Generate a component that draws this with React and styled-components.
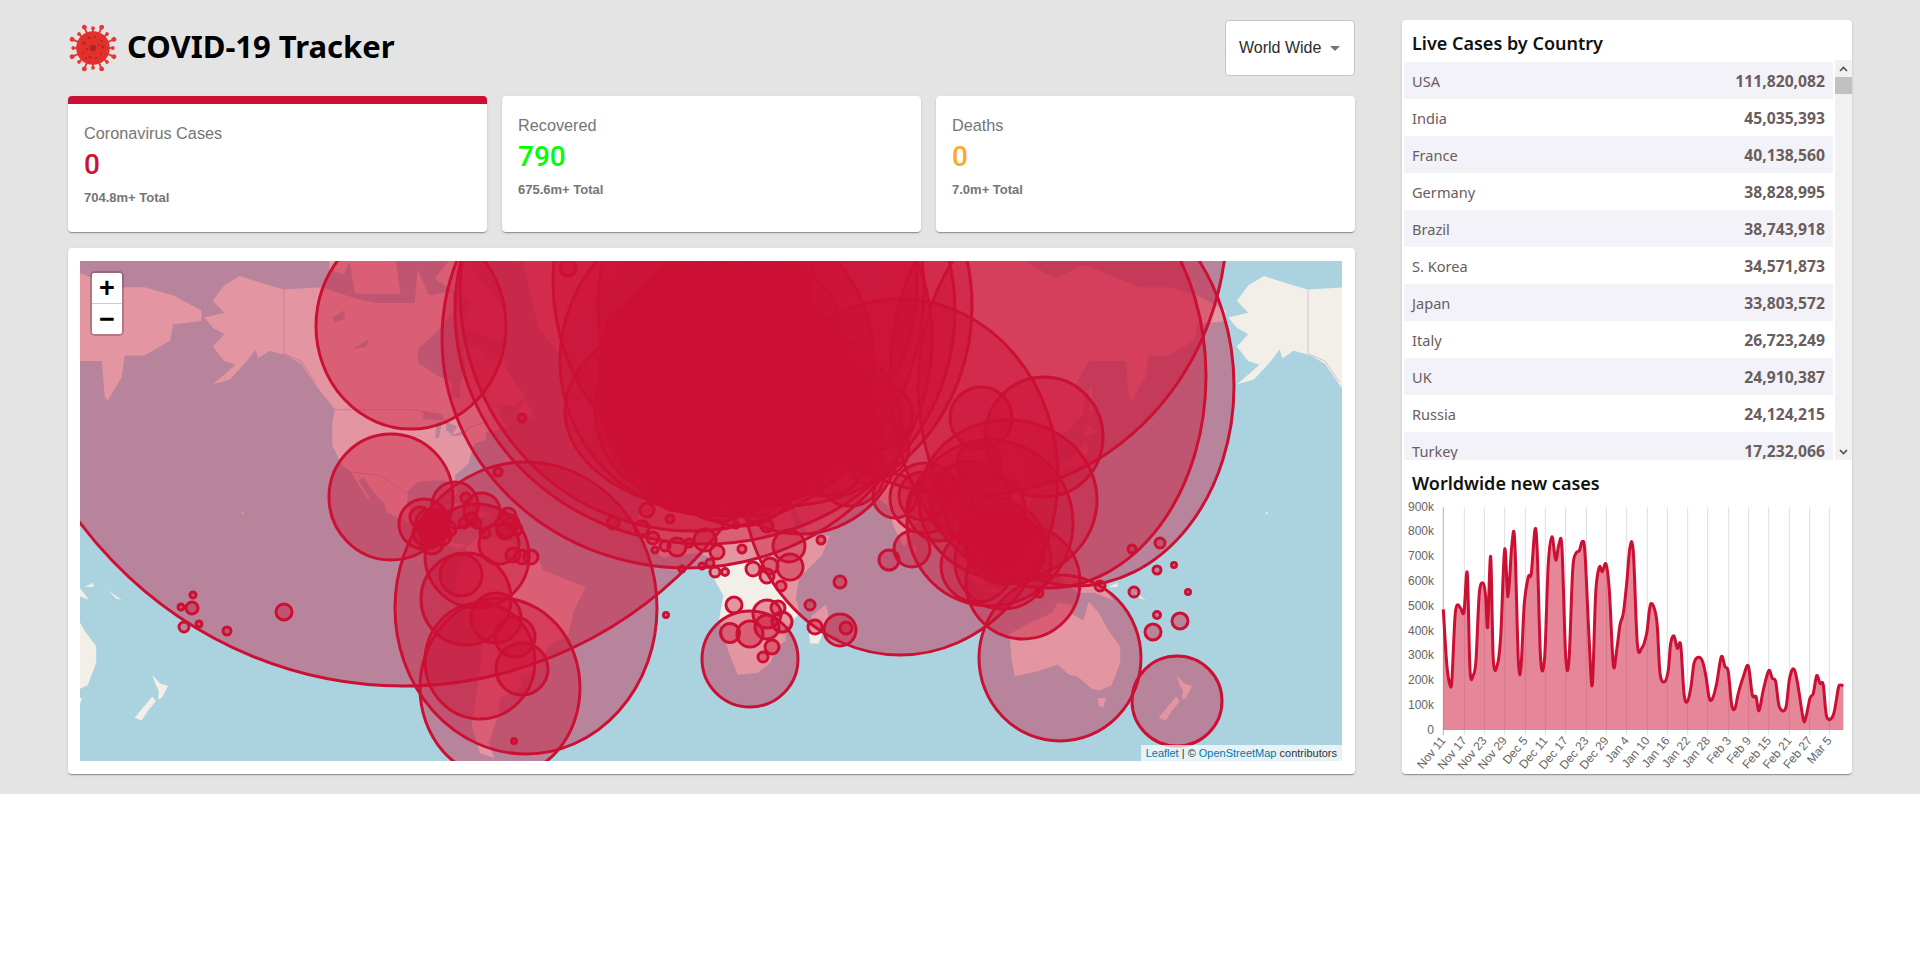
import React from "react";
import styled, { createGlobalStyle } from "styled-components";

const RED = "#cc1034";

const GlobalStyle = createGlobalStyle`
  html, body { margin: 0; padding: 0; background: #fff; }
  body { font-family: "Noto Sans", "Open Sans", sans-serif; }
`;

const Page = styled.div`
  display: flex;
  gap: 47px;
  height: 794px;
  box-sizing: border-box;
  padding: 20px 68px 20px;
  background: #e4e4e4;
`;
const LeftColumn = styled.div`
  width: 1287px;
  display: flex;
  flex-direction: column;
`;
const Header = styled.header`
  display: flex;
  align-items: flex-start;
  justify-content: space-between;
  height: 76px;
`;
const Brand = styled.div`
  display: flex;
  align-items: center;
  gap: 9px;
  height: 56px;
`;
const Title = styled.h1`
  margin: 0;
  padding-bottom: 4px;
  font: 700 31px/1 "Noto Sans", sans-serif;
  color: #000;
`;
const Select = styled.div`
  box-sizing: border-box;
  width: 130px;
  height: 56px;
  display: flex;
  align-items: center;
  gap: 9px;
  padding-left: 13px;
  background: #fff;
  border: 1px solid #c4c4c4;
  border-radius: 4px;
  font: 400 16px "Liberation Sans", Arial, sans-serif;
  color: #2b2b2b;
`;
const Caret = styled.span`
  width: 0;
  height: 0;
  border-left: 5px solid transparent;
  border-right: 5px solid transparent;
  border-top: 5px solid #757575;
`;
const Stats = styled.div`
  display: grid;
  grid-template-columns: repeat(3, 1fr);
  gap: 15px;
`;
const Surface = styled.div`
  background: #fff;
  border-radius: 4px;
  box-shadow: 0 2px 1px -1px rgba(0,0,0,.2), 0 1px 1px 0 rgba(0,0,0,.14), 0 1px 3px 0 rgba(0,0,0,.12);
`;
const StatCard = styled(Surface)`
  box-sizing: border-box;
  height: 136px;
  padding: 17px 16px 16px;
  border-top: ${p => (p.$selected ? `8px solid ${RED}` : "0 solid transparent")};
`;
const StatLabel = styled.div`
  font: 400 16.25px/24px "Liberation Sans", Arial, sans-serif;
  color: #757575;
`;
const StatValue = styled.div`
  font: 500 28px/34px Roboto, sans-serif;
  color: ${p => p.$color};
  margin-top: 3px;
`;
const StatTotal = styled.div`
  font: 700 13px/20px "Liberation Sans", Arial, sans-serif;
  color: #757575;
  margin-top: 6px;
`;
const MapCard = styled(Surface)`
  margin-top: 16px;
  padding: 13px 13px 13px 12px;
  height: 526px;
  box-sizing: border-box;
`;
const MapCanvas = styled.div`
  position: relative;
  width: 1262px;
  height: 500px;
  overflow: hidden;
  background: #aad3df;
`;
const MapSvg = styled.svg`
  display: block;
`;
const ZoomBar = styled.div`
  position: absolute;
  left: 10px;
  top: 10px;
  border: 2px solid rgba(0,0,0,.2);
  border-radius: 5px;
  background-clip: padding-box;
`;
const ZoomButton = styled.div`
  width: 30px;
  height: 30px;
  display: flex;
  align-items: center;
  justify-content: center;
  background: #fff;
  color: #000;
  font: 700 27px/30px "Liberation Sans", sans-serif;
  border-radius: ${p => (p.$top ? "2px 2px 0 0" : "0 0 2px 2px")};
  border-bottom: ${p => (p.$top ? "1px solid #ccc" : "none")};
`;
const Attribution = styled.div`
  position: absolute;
  right: 0;
  bottom: 0;
  padding: 0 5px;
  background: rgba(255,255,255,.7);
  font: 400 11px/16px "Liberation Sans", sans-serif;
  color: #333;
`;
const AttrLink = styled.span`
  color: #0078a8;
`;
const SideCard = styled(Surface)`
  width: 450px;
  height: 754px;
  display: flex;
  flex-direction: column;
  overflow: hidden;
`;
const SideTitle = styled.h3`
  margin: 0;
  box-sizing: border-box;
  padding: ${p => p.$pt}px 10px 0;
  height: ${p => p.$h}px;
  display: flex;
  align-items: center;
  font: 600 18px/1 "Noto Sans", sans-serif;
  color: #111;
`;
const TableWrap = styled.div`
  display: flex;
  height: 400px;
  padding-left: 2px;
`;
const Rows = styled.div`
  flex: 1;
  overflow: hidden;
  padding-top: 2px;
  margin-right: 2px;
`;
const Row = styled.div`
  height: 37px;
  box-sizing: border-box;
  display: flex;
  align-items: center;
  justify-content: space-between;
  padding: 0 8px 0 8px;
  background: ${p => (p.$odd ? "#f3f2f8" : "#fff")};
  font: 400 14.6px "Noto Sans", sans-serif;
  color: #6a5d5d;
`;
const RowValue = styled.strong`
  font-weight: 700;
  font-size: 15.7px;
`;
const ScrollTrack = styled.div`
  width: 17px;
  background: #f1f1f1;
  display: flex;
  flex-direction: column;
`;
const ScrollArrow = styled.div`
  height: 17px;
  display: flex;
  align-items: center;
  justify-content: center;
`;
const ScrollThumb = styled.div`
  height: 17px;
  background: #c1c1c1;
`;
const ScrollGap = styled.div`
  flex: 1;
`;
const ChartSvg = styled.svg`
  display: block;
`;

const ChartText = styled.text`
  font: 400 12px "Liberation Sans", Arial, sans-serif;
  fill: #666;
`;

const stats = [
  { label: "Coronavirus Cases", value: "0", total: "704.8m+ Total", color: RED, selected: true },
  { label: "Recovered", value: "790", total: "675.6m+ Total", color: "#00ff00" },
  { label: "Deaths", value: "0", total: "7.0m+ Total", color: "#ffa726" },
];

const countries = [
  ["USA", "111,820,082"], ["India", "45,035,393"], ["France", "40,138,560"], ["Germany", "38,828,995"],
  ["Brazil", "38,743,918"], ["S. Korea", "34,571,873"], ["Japan", "33,803,572"], ["Italy", "26,723,249"],
  ["UK", "24,910,387"], ["Russia", "24,124,215"], ["Turkey", "17,232,066"],
];

/* ------------ map drawing ------------ */
const WORLD = 1024;
const project = ([lon, lat]) => {
  const m = Math.log(Math.tan(Math.PI / 4 + (lat * Math.PI) / 360));
  return [605 + (lon / 360) * WORLD, 309 - (m * WORLD) / (2 * Math.PI)];
};
const toPath = pts =>
  pts.map((p, i) => {
    const [x, y] = project(p);
    return `${i ? "L" : "M"}${x.toFixed(1)} ${y.toFixed(1)}`;
  }).join("") + "Z";

const LAND = [
  // North America
  [[-169,66],[-162,66.7],[-166,68.3],[-162,70.2],[-156.5,71.3],[-148,70.4],[-141,69.7],[-128,70],[-115,68.5],[-108,68],[-95,68],[-94,72],[-90,69],[-82,69.5],[-81,67],[-87,64],[-94,61],[-94,58.7],[-88,56.5],[-82,55],[-82,52],[-79,51.5],[-79,55],[-77,57],[-78,62],[-72,61.5],[-69,58.8],[-65,60],[-60,55],[-56,52],[-60,50],[-66,50],[-65,48],[-64,46],[-61,45.5],[-66,44],[-70,43.5],[-70,41.7],[-74,40.5],[-75.5,37],[-76,35],[-81,31.5],[-80,26],[-81,25],[-82.7,28],[-84,30],[-89,30],[-94,29.5],[-97.3,27],[-97.8,22],[-95,18.5],[-91,18.5],[-90.5,21],[-87,21.5],[-88,16],[-84,15.8],[-83.5,11],[-81,9],[-78,9.5],[-77.5,8],[-80,7.5],[-83,8.3],[-87,12.5],[-92,14.5],[-96,16],[-105,20],[-105.5,22.5],[-109,25.8],[-113,31],[-114.7,30],[-110,23],[-112,25],[-115,29],[-117.2,32.5],[-120.5,34.5],[-124,40],[-124,46],[-123,49],[-130,54.5],[-135,58.5],[-140,60],[-146,60.8],[-150,59.5],[-151,61],[-154,59],[-160,55.5],[-166,54.5],[-158,58.3],[-162,59],[-166,61.5],[-162,63.5],[-166,64.5]],
  // Arctic islands
  [[-80,74],[-72,71],[-62,66.5],[-65,62],[-72,63.5],[-78,65],[-75,68],[-88,71]],
  [[-118,73],[-102,73.5],[-100,69.2],[-116,69.2]],
  [[-125,74],[-116,74],[-120,71.5],[-125,72]],
  [[-100,74],[-90,74],[-92,76],[-100,76]],
  [[-56,51.5],[-53,47],[-59,47.7]],
  // Greenland
  [[-44,60],[-52,65],[-55,70],[-60,76],[-30,80],[-22,72],[-32,68],[-40,65]],
  // Iceland
  [[-24,65.5],[-15,66.3],[-14,64.7],[-20,63.5]],
  // Cuba, Hispaniola
  [[-85,22],[-80,23],[-74.2,20.2],[-78,19.9]],
  [[-74.4,19.8],[-69,19.8],[-68.4,18.5],[-74.4,18.2]],
  // South America
  [[-77,8],[-72,12],[-62,10.5],[-52,5],[-50,0],[-44,-2.5],[-35,-6],[-39,-14],[-41,-22],[-48,-26],[-53,-34],[-58,-35],[-57,-38],[-65,-41],[-66,-46],[-69,-52],[-67,-55],[-72,-54],[-75,-48],[-73,-38],[-70.5,-20],[-76,-14],[-81,-5],[-79.5,1],[-77,4]],
  // Africa
  [[-6,35.5],[10,37],[11,33.5],[20,31],[25,31.5],[32,31],[34,28],[37,21],[39,15],[43,11.5],[51,12],[48,5],[40,-3],[39,-10],[40.5,-15],[35,-20],[35.5,-24],[32.5,-26],[30,-31],[25.5,-34],[18.5,-34.5],[15,-27],[12,-17],[13.5,-9],[9,-1],[9.5,4],[5,6],[-4,5],[-8,4.5],[-13,9],[-17,14.5],[-16,21],[-13,27],[-9,31]],
  // Eurasia
  [[5,60],[8,58],[11,59],[12.5,56],[10,54],[8.5,54],[4,52],[1.5,50.5],[-1.5,49.5],[-4.5,48.5],[-1,46],[-1.8,43.4],[-9,43.5],[-9,38],[-5.5,36],[-1,37],[0.5,40],[3,42],[7,43.5],[10,44],[12,42],[15.5,40],[16,38],[18,40],[16,41.5],[13,44],[13.5,45.6],[19,42],[20,39.5],[23,37],[24,40.5],[26,40.5],[29,41],[28,43],[30,46],[33,46],[35,45],[38,47],[37.5,45],[41,42],[36,41],[30,41],[27,39],[28,36.5],[36,36.5],[35,32],[34,28],[35,28],[37,24],[43,13],[52,16],[59,22.5],[56.5,25],[51.5,24.5],[48,30],[51,27],[57,26.5],[61,25],[67,25],[72.5,21],[73,16],[77,8],[80,13],[80.5,15.5],[87,21],[92,22],[94.5,16],[97,17],[98.5,9],[103.5,1.5],[101,3],[100,10],[103,11],[106,9],[109,12.5],[106,19],[108,21.5],[113,22],[120,26],[122,31],[119,35],[122,37],[118,39],[121,40],[126,38],[126.5,34.5],[129,36],[127.5,40],[130,42.5],[135,44],[140,48],[141,53],[137,54],[142,59],[155,59],[156,52],[157,51],[162,56],[163,60],[170,60],[179,62.5],[180,65],[190,65.5],[190,67],[180,69],[170,70],[160,70],[140,72.5],[130,71],[113,74],[100,77],[80,73],[70,73],[68,69],[60,69],[45,68],[40,65],[35,65],[41,67],[33,69.5],[25,71],[15,68],[5,62]],
  // UK, Ireland
  [[-5,50],[1,51.3],[0,53.5],[-2,56],[-3,58.5],[-6,57],[-3,54],[-5,52]],
  [[-10,52],[-6,52.2],[-6,55],[-9,54]],
  // Japan, Sakhalin, Taiwan
  [[130,31.5],[132,33],[136,34],[140,35],[141.5,39],[141,41.5],[140,40],[136,36.5],[131,34]],
  [[140,42],[145,43.5],[142,45.5]],
  [[142,46],[143.5,49],[143,54],[142,53]],
  [[120,23],[121.5,22],[122,25],[121,25]],
  // SE Asia islands
  [[95,5.5],[100,2],[104,-2],[106,-6],[102,-4.5],[98,0]],
  [[105,-6.5],[110,-6.5],[114.5,-8],[106,-7.8]],
  [[109,1],[113,3],[117,7],[119,5],[117.5,1],[116,-4],[111,-3]],
  [[119.5,0.5],[125,1.5],[121,-1],[122.5,-5],[120,-5.5]],
  [[120,18.5],[122,18],[124,13],[121,13.5]],
  [[122,9],[126,9.5],[126,6],[123,7]],
  [[131,-1],[141,-2.5],[147,-6],[150.5,-10.5],[144,-8],[138,-8],[133,-4]],
  [[152,-4.5],[152,-6],[149,-6]],
  [[157,-7],[162,-10.5],[160,-10]],
  // Sri Lanka, Madagascar
  [[80,9.5],[82,7],[80.5,6]],
  [[49.5,-12],[50.5,-16],[47,-25],[44,-25],[43.5,-21],[44.5,-16]],
  // Australia, Tasmania, NZ
  [[114,-22],[122,-18],[129,-15],[131,-11.5],[136,-12],[135.5,-15],[140,-17.5],[142,-11],[145.5,-15],[149,-21],[153,-26],[153,-31],[150,-37.5],[146,-39],[143,-38.5],[138,-35],[135,-34.5],[131,-31.5],[124,-33.5],[116,-35],[115,-31]],
  [[145,-41],[148,-41],[147,-43.5],[145.5,-43]],
  [[172.7,-34.5],[175.5,-37],[178.3,-37.7],[176,-41],[174.8,-41.3],[175,-39],[174,-37.5]],
  [[172.7,-40.6],[174,-41.8],[171,-44.5],[169,-46.7],[166.5,-46],[170,-43]],
  // Hawaii
  [[-156,20.2],[-155,19.7],[-155.6,19]],
];
const WATER = [
  [[-92,48.7],[-85,48],[-85,46.5],[-92,46.7]],
  [[-87.5,46],[-85.5,46],[-86.5,42],[-87.8,42]],
  [[-84,46],[-80,45],[-82,43],[-84,44]],
  [[-83,42.5],[-79,43.5],[-76,44],[-79,42.7]],
  [[-124,66],[-120,67],[-119.5,65.8],[-123,65.3]],
  [[-117,61],[-111,62.8],[-112,61.5]],
  [[47,45],[53,46],[54,38],[50,37],[49,41]],
];
const BORDERS = [
  [[-141,69.7],[-141,60.3],[-135,59],[-130,55]],
  [[-123,49],[-95,49],[-89,48],[-83,46],[-82,43],[-79,43],[-75,45],[-70,46],[-67.5,47],[-67,45]],
  [[-117,32.5],[-107,31.5],[-103,29],[-97.5,26]],
  [[-92,14.7],[-89,17.8]],
];

// cx, cy, rx, ry
const OUTBREAKS = [
  [323,0,410,425],[607,78,245,229],[625,50,250,233],[612,30,232,240],[996,125,158,200],[968,115,158,212],
  [889,-40,258,275],[820,216,158,178],[705,45,187,200],[655,20,182,200],[637,100,157,155],[640,150,155,100],
  [446,347,131,146],[420,427,80,90],[331,65,95,103],[311,236,62,63],[386,338,45,46],[400,400,55,58],[397,295,52,52],
  [670,398,48,48],[980,397,81,83],[1097,440,45,45],[928,239,89,80],[964,176,59,60],[943,321,57,57],[720,170,102,103],
  [640,120,120],[625,135,105],[655,140,100],[605,150,90],[670,120,100],[645,170,85],[615,110,95],
  [640,90,100],[610,180,70],[660,200,65],[690,190,50],[640,215,45],[745,190,45],[770,210,35],[600,215,35],[750,160,40],[652,80,82],
  [652,45,80],[620,70,70],[690,70,70],[590,110,55],[710,110,55],[610,200,40],[675,225,30],
  [800,155,33],[800,187,29],[790,180,13],[786,206,16],[815,235,22],[550,72,25],[488,7,8],
  [901,157,31],[910,262,83],[923,300,48],[897,305,36],[843,235,24],[860,247,33],[845,237,35],[899,202,22],
  [925,283,40],[905,250,40],[890,240,40],[935,290,30],[915,270,34],
  [832,288,18],[809,299,10],[381,314,21],[344,263,25],[375,244,23],[402,250,18],[419,283,20],[427,264,11],[435,376,20],[416,357,25],[442,408,26],
  [433,294,7],[442,296,7],[451,296,7],[350,262,14],[356,270,12],[345,272,12],[360,258,10],[352,282,11],[362,275,9],[340,256,10],[368,268,8],[354,266,13],[348,268,10],
  [428,255,8],[432,262,7],[436,268,6],[425,270,8],[392,258,6],[384,262,5],[405,272,5],[397,262,4],
  [113,334,3],[101,346,3],[112,347,6],[104,366,5],[119,363,3],[147,370,4],[204,351,8],[386,237,5],[418,211,4],[442,157,4],
  [1052,288,4],[1080,282,5],[1077,309,4],[1094,304,2.5],[1020,325,5],[1054,331,5],[1108,331,2.5],[1077,354,3.5],[1100,360,8],[1073,371,8],[959,332,4],
  [654,344,8],[650,372,9.5],[670,373,13],[687,353,14],[687,366,12],[702,361,10],[698,347,7],[692,386,7],[683,396,5],[730,344,5],[735,366,7],[760,369,16],[766,367,6],[760,321,6],
  [586,354,2.5],[434,480,2.5],[710,306,13],[709,285,16],[673,308,7],[687,315,7],[690,305,8],[701,325,5],[635,311,5],[645,311,3.5],[630,302,4],[637,291,7],[741,279,4],
  [625,279,11],[597,286,9],[575,289,3],[585,285,5],[609,282,4],[573,277,6],[562,267,7],[533,262,6],[590,258,4],[567,249,7],[687,265,6],[656,264,3],[662,288,4],[602,308,3],[622,305,3],
];

const MapDrawing = () => (
  <MapSvg width="1262" height="500" viewBox="0 0 1262 500">
    {[-WORLD, 0, WORLD].map(dx => (
      <g key={dx} transform={`translate(${dx} 0)`}>
        {LAND.map((pts, i) => <path key={i} d={toPath(pts)} fill="#f2efe9" />)}
        {WATER.map((pts, i) => <path key={i} d={toPath(pts)} fill="#aad3df" />)}
        {BORDERS.map((pts, i) => (
          <path key={i} d={toPath(pts).replace("Z", "")} fill="none" stroke="#c9b9c9" strokeWidth="0.8" />
        ))}
      </g>
    ))}
    {OUTBREAKS.map(([cx, cy, rx, ry], i) => (
      <ellipse key={i} cx={cx} cy={cy} rx={rx} ry={ry ?? rx} fill={RED} fillOpacity="0.4" stroke={RED} strokeWidth="3" />
    ))}
  </MapSvg>
);

/* ------------ chart ------------ */
const TRACE = [[160,538],[170,700],[180,765],[186,745],[195,560],[202,525],[212,535],[222,545],[232,430],[240,720],[250,735],[258,690],[268,490],[280,460],[287,500],[293,590],[302,380],[310,690],[322,705],[332,620],[344,358],[354,500],[365,350],[374,330],[385,690],[393,710],[403,520],[415,440],[424,430],[435,298],[442,370],[452,690],[464,680],[475,400],[486,320],[497,390],[507,342],[516,355],[527,680],[537,690],[548,420],[558,370],[568,362],[577,335],[585,370],[597,620],[607,765],[617,490],[628,412],[637,425],[648,402],[658,480],[670,705],[680,660],[690,585],[700,550],[710,460],[720,352],[730,365],[742,640],[755,655],[770,610],[782,522],[800,570],[810,730],[824,755],[835,720],[842,640],[852,618],[862,655],[872,645],[882,790],[892,815],[903,770],[912,700],[925,682],[938,695],[948,740],[958,805],[968,805],[980,760],[994,680],[1005,710],[1015,725],[1025,825],[1035,835],[1045,790],[1060,740],[1075,708],[1087,795],[1098,800],[1107,842],[1120,780],[1136,722],[1147,745],[1157,755],[1168,830],[1187,835],[1198,750],[1210,716],[1222,755],[1240,868],[1248,860],[1260,805],[1270,790],[1280,737],[1290,760],[1300,765],[1310,860],[1330,855],[1345,775],[1352,765],[1360,768]];
const X = z => z / 3 - 12;
const Y = z => z / 3 - 66;
const trace = TRACE.map(([x, y]) => [X(x), Y(y)]);
const smooth = pts => {
  let d = `M${pts[0][0].toFixed(1)} ${pts[0][1].toFixed(1)}`;
  for (let i = 0; i < pts.length - 1; i++) {
    const p0 = pts[i - 1] || pts[i], p1 = pts[i], p2 = pts[i + 1], p3 = pts[i + 2] || p2;
    const c1 = [p1[0] + (p2[0] - p0[0]) / 6, p1[1] + (p2[1] - p0[1]) / 6];
    const c2 = [p2[0] - (p3[0] - p1[0]) / 6, p2[1] - (p3[1] - p1[1]) / 6];
    d += `C${c1[0].toFixed(1)} ${c1[1].toFixed(1)} ${c2[0].toFixed(1)} ${c2[1].toFixed(1)} ${p2[0].toFixed(1)} ${p2[1].toFixed(1)}`;
  }
  return d;
};
const linePath = smooth(trace);
const BASE = Y(900);
const areaPath = `${linePath}L${X(1360)} ${BASE}L${X(160)} ${BASE}Z`;
const GRID = [160,223,283,344,406,466,527,589,649,710,772,832,893,953,1016,1076,1136,1198,1259,1318];
const DATES = ["Nov 11","Nov 17","Nov 23","Nov 29","Dec 5","Dec 11","Dec 17","Dec 23","Dec 29","Jan 4","Jan 10","Jan 16","Jan 22","Jan 28","Feb 3","Feb 9","Feb 15","Feb 21","Feb 27","Mar 5"];
const TICKS = [["900k",232],["800k",302],["700k",377],["600k",452],["500k",527],["400k",602],["300k",675],["200k",750],["100k",825],["0",900]];

const Chart = () => (
  <ChartSvg width="450" height="278" viewBox="0 0 450 278">
    {GRID.map((g, i) => (
      <line key={g} x1={X(g)} x2={X(g)} y1={Y(232)} y2={BASE + 5} stroke={i ? "rgba(0,0,0,.13)" : "rgba(0,0,0,.3)"} />
    ))}
    {TICKS.map(([t, z]) => (
      <ChartText key={t} x={X(132)} y={Y(z) + 4} textAnchor="end">{t}</ChartText>
    ))}
    <path d={areaPath} fill="rgba(204,16,52,.5)" />
    <path d={linePath} fill="none" stroke={RED} strokeWidth="3" />
    {DATES.map((t, i) => (
      <ChartText key={t} textAnchor="end" transform={`translate(${X(GRID[i]) + 3} ${BASE + 11}) rotate(-50)`}>{t}</ChartText>
    ))}
  </ChartSvg>
);

const VirusLogo = () => {
  const angles = Array.from({ length: 16 }, (_, i) => i * 22.5);
  return (
    <svg width="50" height="50" viewBox="-25 -25 50 50">
      {angles.map((a, i) => {
        const long = i % 2 === 1;
        const end = long ? -22.6 : -19.8;
        return (
          <g key={a} transform={`rotate(${a})`}>
            <line x1="0" y1="-15" x2="0" y2={end} stroke="#e53935" strokeWidth="1.9" />
            <circle cx="0" cy={end} r={long ? 2.4 : 1.9} fill="#e53935" />
          </g>
        );
      })}
      <circle r="16.8" fill="#e2302a" />
      <circle r="3.2" fill="#b3261f" />
      {[[-9,-5],[-6,1],[-10,5],[-4,-10],[2,-11],[9,-7],[10,-1],[8,6],[3,10],[-3,9],[-7,10],[6,-3]].map(([x, y], i) => (
        <circle key={i} cx={x} cy={y} r={i % 3 === 0 ? 1.6 : 1} fill="#b3261f" />
      ))}
    </svg>
  );
};

const Chevron = ({ up }) => (
  <svg width="9" height="6" viewBox="0 0 9 6">
    <path d={up ? "M1 5L4.5 1.5L8 5" : "M1 1L4.5 4.5L8 1"} fill="none" stroke="#505050" strokeWidth="1.6" />
  </svg>
);

export default function App() {
  return (
    <>
      <GlobalStyle />
      <Page>
        <LeftColumn>
          <Header>
            <Brand>
              <VirusLogo />
              <Title>COVID-19 Tracker</Title>
            </Brand>
            <Select>World Wide<Caret /></Select>
          </Header>
          <Stats>
            {stats.map(s => (
              <StatCard key={s.label} $selected={s.selected}>
                <StatLabel>{s.label}</StatLabel>
                <StatValue $color={s.color}>{s.value}</StatValue>
                <StatTotal>{s.total}</StatTotal>
              </StatCard>
            ))}
          </Stats>
          <MapCard>
            <MapCanvas>
              <MapDrawing />
              <ZoomBar>
                <ZoomButton $top>+</ZoomButton>
                <ZoomButton>−</ZoomButton>
              </ZoomBar>
              <Attribution>
                <AttrLink>Leaflet</AttrLink> | © <AttrLink>OpenStreetMap</AttrLink> contributors
              </Attribution>
            </MapCanvas>
          </MapCard>
        </LeftColumn>
        <SideCard>
          <SideTitle $h={40} $pt={6}>Live Cases by Country</SideTitle>
          <TableWrap>
            <Rows>
              {countries.map(([name, cases], i) => (
                <Row key={name} $odd={i % 2 === 0}>
                  <span>{name}</span>
                  <RowValue>{cases}</RowValue>
                </Row>
              ))}
            </Rows>
            <ScrollTrack>
              <ScrollArrow><Chevron up /></ScrollArrow>
              <ScrollThumb />
              <ScrollGap />
              <ScrollArrow><Chevron /></ScrollArrow>
            </ScrollTrack>
          </TableWrap>
          <SideTitle $h={36} $pt={10}>Worldwide new cases</SideTitle>
          <Chart />
        </SideCard>
      </Page>
    </>
  );
}
